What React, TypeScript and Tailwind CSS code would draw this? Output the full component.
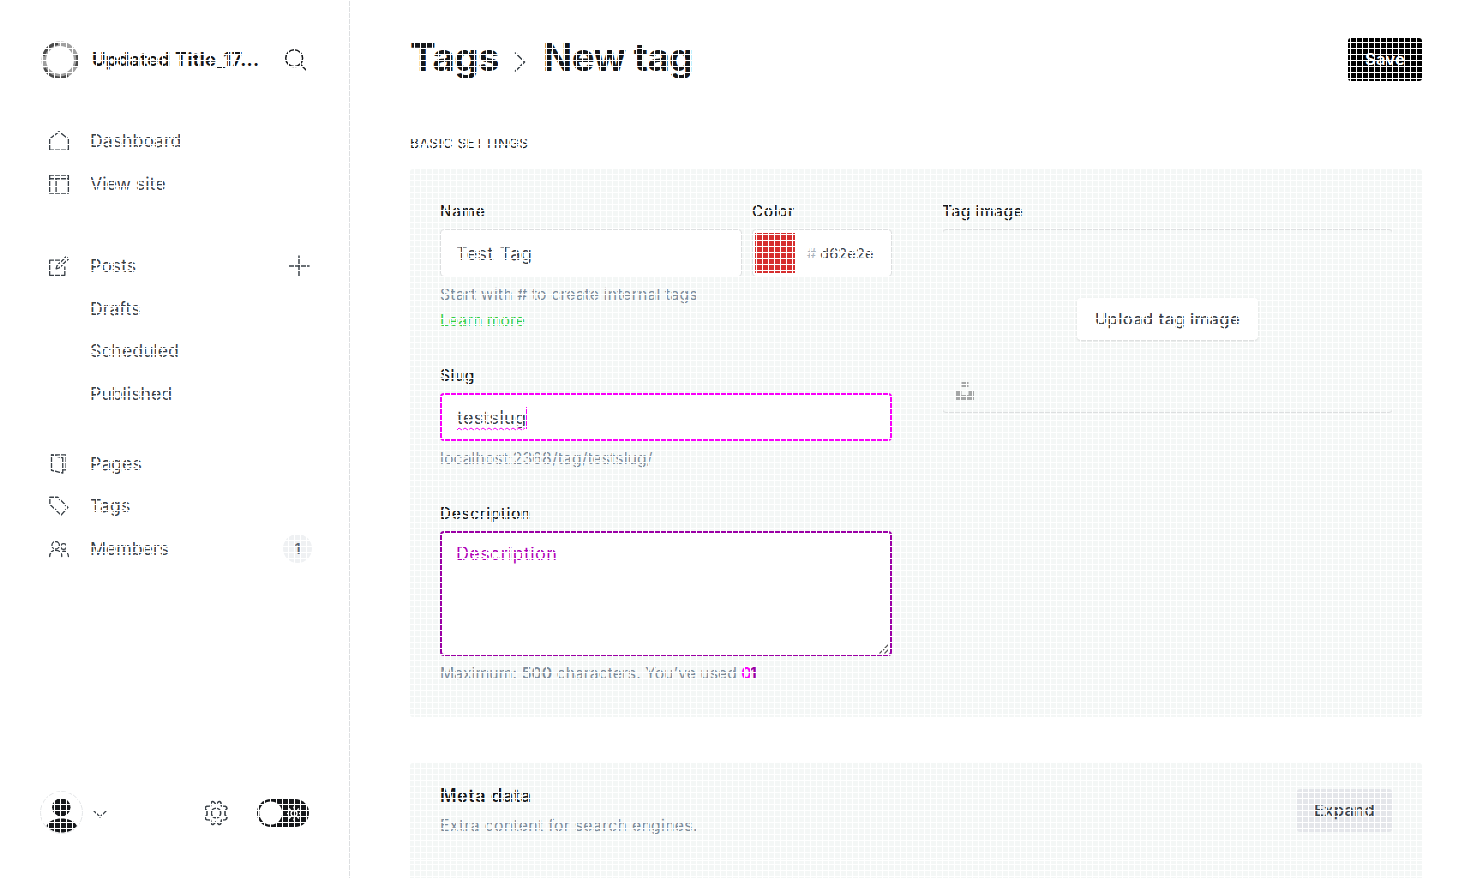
import React from "react";

const stroke = {
  fill: "none",
  stroke: "currentColor",
  strokeWidth: 1.6,
  strokeLinecap: "round" as const,
  strokeLinejoin: "round" as const,
};

function Icon({ children, className = "w-5 h-5" }: { children: React.ReactNode; className?: string }) {
  return (
    <svg viewBox="0 0 24 24" className={className + " shrink-0 overflow-visible"} {...stroke}>
      {children}
    </svg>
  );
}

const icons = {
  home: <path d="M.75 9.5V23h22.5V9.5L12 .75Z" />,
  site: <path d="M.75 1.2h22.5v21.700H.75ZM.75 5.700h22.500M8.500 5.700v17" />,
  posts: (
    <>
      <path d="M13 5H.75v18.2H19V13" />
      <path d="m20.5.8 2.7 2.7L12.5 14.2l-4 1.2 1.2-4Z" />
    </>
  ),
  pages: (
    <>
      <path d="M3 1h17.5v18H17" />
      <path d="M3 1v18.5L16.5 23V4.5L3 1" />
    </>
  ),
  tags: <path d="M1 1.500h9.500l12.200 12.200-8.200 9.100L1 10Z" />,
  members: (
    <>
      <circle cx="8" cy="7.5" r="4.5" />
      <circle cx="17.5" cy="9" r="3.5" />
      <path d="M.8 21c0-10 14.500-10 14.500 0M16.500 14.800c4-.5 6.800 2 6.800 6.200" />
    </>
  ),
};

function NavItem({ icon, label, children }: { icon?: React.ReactNode; label: string; children?: React.ReactNode }) {
  return (
    <div className="flex h-[42.5px] items-center pl-[49px] pr-[39px] text-[#394047]">
      <div className="w-[41px] shrink-0">{icon && <Icon>{icon}</Icon>}</div>
      <span className="flex-1 text-[17.7px] leading-6">{label}</span>
      {children}
    </div>
  );
}

function Sidebar() {
  return (
    <aside className="flex h-full w-[350px] shrink-0 flex-col border-r border-[#dddfe1] bg-white">
      <div className="flex h-[119px] items-center pl-[41px] pr-[42px]">
        <svg viewBox="0 0 38 38" className="h-[38px] w-[38px] shrink-0">
          <circle cx="19" cy="19" r="16.2" fill="none" stroke="#a0a0a0" strokeWidth="4.6" />
          <path d="M2.500 15A16.500 16.500 0 0 1 17 2.500M36 14a16.500 16.500 0 0 1-1 12M27 34.500A16.500 16.500 0 0 1 3.500 27" fill="none" stroke="#4a4a4a" strokeWidth="2.800" />
        </svg>
        <span className="-mt-px ml-[13px] flex-1 whitespace-nowrap text-[18.4px] font-bold leading-6 tracking-[0.27px] text-[#15171a]">Updated Title_17...</span>
        <Icon className="h-[22px] w-[22px] text-[#15171a]">
          <circle cx="10" cy="10" r="9.2" />
          <path d="m17 17 6 6" />
        </Icon>
      </div>
      <nav className="flex flex-col pt-px">
        <NavItem icon={icons.home} label="Dashboard" />
        <NavItem icon={icons.site} label="View site" />
        <div className="h-[40px]" />
        <NavItem icon={icons.posts} label="Posts">
          <Icon className="h-[22px] w-[22px]">
            <path d="M12 1v22M1 12h22" />
          </Icon>
        </NavItem>
        <NavItem label="Drafts" />
        <NavItem label="Scheduled" />
        <NavItem label="Published" />
        <div className="h-[27.4px]" />
        <NavItem icon={icons.pages} label="Pages" />
        <NavItem icon={icons.tags} label="Tags" />
        <NavItem icon={icons.members} label="Members">
          <span className="-mr-[2px] flex h-[29px] w-[29px] items-center justify-center rounded-full bg-[#eff1f3] text-[14.5px] font-semibold text-[#5d6570]">1</span>
        </NavItem>
      </nav>
      <div className="mb-[44px] mt-auto flex h-[43px] items-center pl-[40px] pr-[40px]">
        <svg viewBox="0 0 43 43" className="h-[43px] w-[43px] shrink-0">
          <circle cx="21.5" cy="21.5" r="21" fill="#fff" stroke="#e4e6e8" />
          <circle cx="21.3" cy="16.2" r="9.2" fill="#15171a" />
          <path d="M6.500 35C9 29.500 15 27.500 21.500 27.500S34 29.500 37 35C33 39.500 27 41.500 21.500 41.500S10.500 39.500 6.500 35Z" fill="#15171a" />
        </svg>
        <svg viewBox="0 0 14 8" className="ml-[10px] mt-[2px] h-2 w-[14px]" {...stroke} stroke="#394047" strokeWidth="1.3">
          <path d="m.8.8 6.200 6.200L13.200.8" />
        </svg>
        <Icon className="ml-auto h-6 w-6 text-[#394047]">
          <circle cx="12" cy="12" r="4.700" />
          <path d="M12 3.200 14.500.7Q16 .2 16.800 1.500L17.500 5l3.800.2q1.500.6 1.700 2.200L21 10v4l2 2.600q-.2 1.600-1.700 2.200l-3.800.2-.7 3.500q-.8 1.300-2.300.8L12 20.800 9.500 23.300q-1.500.5-2.300-.8L6.500 19l-3.800-.2Q1.200 18.200 1 16.600L3 14v-4L1 7.400q.2-1.600 1.700-2.200L6.500 5l.7-3.500Q8 .2 9.500.7Z" />
        </Icon>
        <svg viewBox="0 0 52 28" className="ml-[29px] h-7 w-[52px] shrink-0">
          <rect width="52" height="28" rx="14" fill="#15171a" />
          <circle cx="13.700" cy="14" r="11.500" fill="#fff" />
          <circle cx="37" cy="14.500" r="3" fill="none" stroke="#fff" strokeWidth="1.400" />
          <path d="M37 7.500v2M37 19.500v2M30 14.500h2M42 14.500h2M32 9.500l1.500 1.500M40.500 18l1.500 1.500M42 9.500 40.500 11M33.500 18 32 19.500" stroke="#fff" strokeWidth="1.500" />
        </svg>
      </div>
    </aside>
  );
}

function Label({ children }: { children: React.ReactNode }) {
  return (
    <div className="h-9 pt-[7px] text-[15.5px] font-medium leading-[24px] tracking-[0.5px] text-[#15171a]">{children}</div>
  );
}

const hint = "text-[15.7px] leading-[26px] text-[#7c8b9a]";
const field = "flex h-12 items-center rounded bg-white";

function BasicSettings() {
  return (
    <section className="flex h-[548px] shrink-0 rounded-[3px] bg-[#f4f7f6] pl-[30px] pt-[24px]">
      <div className="flex w-[452px] flex-col">
        <div className="flex gap-[10px]">
          <div className="w-[302px]">
            <Label>Name</Label>
            <div className={field + " border border-[#dddfe0] pl-[15px] text-[18px] tracking-[0.45px] text-[#394047]"}>Test Tag</div>
          </div>
          <div className="w-[140px]">
            <Label>Color</Label>
            <div className={field + " border border-[#dddfe0] pl-[2px] text-[14.5px]"}>
              <div className="h-10 w-10 bg-[#d62e2e]" />
              <span className="ml-[12px] pt-[2px] text-[#abb4be]">#</span>
              <span className="ml-[4px] pt-[2px] tracking-[0.15px] text-[#394047]">d62e2e</span>
            </div>
          </div>
        </div>
        <div className={hint + " pt-[5px] tracking-[0.18px]"}>Start with # to create internal tags</div>
        <div className="text-[15.7px] leading-[26px] text-[#30cf43]">Learn more</div>
        <div className="mt-[23px]">
          <Label>Slug</Label>
        </div>
        <div className={field + " border-2 border-[#fa00fa] pl-[15px] text-[18px] tracking-[0.3px] text-[#394047]"}>
          <div className="relative">
            testslug
            <svg viewBox="0 0 69 4" className="absolute bottom-0 left-0 h-1 w-[69px]">
              <path d="M0 3 2 1l3 2 3-2 3 2 3-2 3 2 3-2 3 2 3-2 3 2 3-2 3 2 3-2 3 2 3-2 3 2 3-2 3 2 3-2 3 2 3-2 3 2 3-2" fill="none" stroke="#fa00fa" />
            </svg>
          </div>
          <div className="mt-px h-[22px] w-px bg-[#fa00fa]" />
        </div>
        <div className={hint + " pt-[5px] tracking-[0.12px]"}>localhost:2368/tag/testslug/</div>
        <div className="mt-[23px]">
          <Label>Description</Label>
        </div>
        <div className="relative h-[125px] rounded border-2 border-[#9b00a5] bg-white pl-[14px] pt-[8px] text-[18px] leading-[25px] tracking-[0.34px] text-[#b000b8]">
          Description
          <svg viewBox="0 0 10 10" className="absolute bottom-0 right-px h-[10px] w-[10px]">
            <path d="M.5 9.500 9.500.5M5.500 9.500l4-4" stroke="#555" strokeWidth="1.200" />
          </svg>
        </div>
        <div className={hint + " whitespace-nowrap pt-[5px] tracking-[0.05px]"}>
          Maximum: <b className="font-semibold">500</b> characters. You’ve used{" "}
          <b className="tracking-[-2px] text-[#fa00fa]">0</b>
          <b className="text-[#9b00a5]">1</b>
        </div>
      </div>
      <div className="ml-[50px] w-[451px]">
        <Label>Tag image</Label>
        <div className="relative flex h-[184px] items-center justify-center rounded border border-[#dddfe0]">
          <button className="-mt-[5px] h-[42px] w-[181px] whitespace-nowrap rounded bg-white pt-px text-[16.5px] font-medium tracking-[0.42px] text-[#394047] shadow-sm">
            Upload tag image
          </button>
          <svg viewBox="0 0 18 18" className="absolute bottom-[12px] left-[13px] h-[18px] w-[18px]">
            <path d="M5.500 0h7v5h-7ZM0 8h5.500v5h7V8H18v10H0Z" fill="#a4a6a6" />
          </svg>
        </div>
      </div>
    </section>
  );
}

export default function App() {
  return (
    <div className="relative flex h-[878px] w-[1483px] overflow-hidden bg-white font-['Inter',sans-serif]">
      <Sidebar />
      <main className="flex min-w-0 flex-1 flex-col overflow-hidden pl-[60px] pr-[61px]">
        <header className="flex h-[119px] shrink-0 items-center">
          <h1 className="flex items-center whitespace-nowrap pb-[6px] text-[38.5px] font-bold leading-[48px] -tracking-[0.5px] text-[#15171a]">
            <span className="w-[104px]">Tags</span>
            <svg viewBox="0 0 12 20" className="mt-[10px] h-5 w-3" {...stroke} stroke="#394047">
              <path d="m1.500 1 9 9-9 9" />
            </svg>
            <span className="ml-[17px] tracking-[-0.7px]">New tag</span>
          </h1>
          <button className="ml-auto h-[43px] w-[74px] rounded-[3px] bg-black text-[16.5px] font-semibold tracking-[0.2px] text-white">Save</button>
        </header>
        <div className="h-[50px] shrink-0 pt-[14px] text-[13.5px] leading-5 tracking-[0.55px] text-[#15171a]">BASIC SETTINGS</div>
        <BasicSettings />
        <section className="mt-[46px] h-[140px] shrink-0 rounded-[3px] bg-[#f4f7f6]">
          <div className="flex h-[98px] justify-between border-b border-white px-[30px]">
            <div className="pt-[20px]">
              <div className="text-[18px] font-semibold leading-[26px] tracking-[0.5px] text-[#15171a]">Meta data</div>
              <div className={hint + " pt-[4px] tracking-[0.36px]"}>Extra content for search engines.</div>
            </div>
            <button className="mt-[26px] h-[43px] w-[95px] rounded-[3px] bg-[#e4e6ea] text-[16.5px] font-medium tracking-[0.35px] text-[#394047]">Expand</button>
          </div>
        </section>
      </main>
      <div className="pointer-events-none absolute inset-0 bg-[linear-gradient(to_right,white_1px,transparent_1px),linear-gradient(to_bottom,white_1px,transparent_1px)] bg-[size:6px_6px]" />
    </div>
  );
}
